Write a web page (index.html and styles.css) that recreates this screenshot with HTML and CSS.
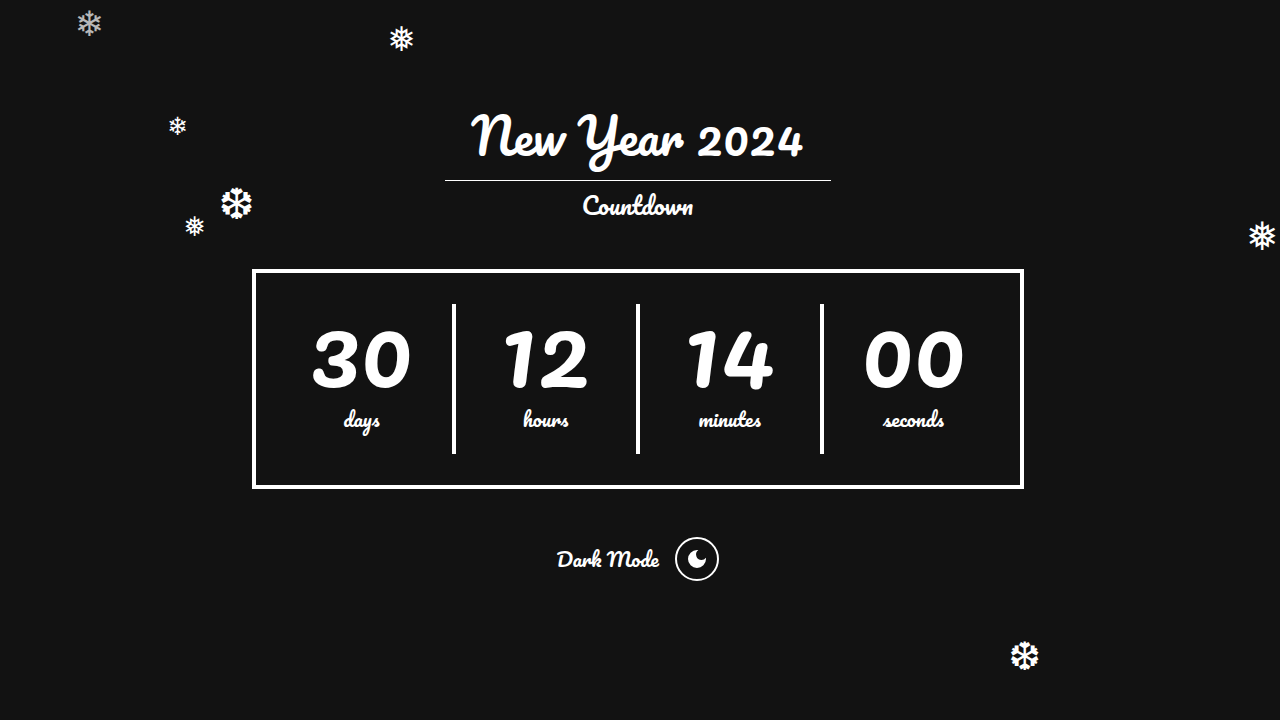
FILE: index.html
```html
<!DOCTYPE html>
<html lang="en">
<head>
<meta charset="utf-8">
<title>New Year Countdown</title>
<link rel="stylesheet" href="styles.css">
</head>
<body>
<main class="page">
  <header class="heading">
    <h1 class="title">New Year 2024</h1>
    <h2 class="subtitle">Countdown</h2>
  </header>
  <section class="countdown">
    <div class="unit"><div class="value">30</div><div class="label">days</div></div>
    <div class="unit"><div class="value">12</div><div class="label">hours</div></div>
    <div class="unit"><div class="value">14</div><div class="label">minutes</div></div>
    <div class="unit"><div class="value">00</div><div class="label">seconds</div></div>
  </section>
  <div class="mode">
    <span class="mode-text">Dark Mode</span>
    <button class="toggle" aria-label="Toggle theme"><svg width="24" height="24" viewBox="0 0 24 24"><path d="M12 3a9 9 0 1 0 9 9c0-.46-.04-.92-.1-1.360a5.389 5.389 0 0 1-4.400 2.260 5.403 5.403 0 0 1-3.140-9.800c-.44-.06-.9-.1-1.360-.1z"/></svg></button>
  </div>
</main>
<div class="flake f1">❄</div>
<div class="flake f2">❅</div>
<div class="flake f3">❄</div>
<div class="flake f4">❆</div>
<div class="flake f5">❅</div>
<div class="flake f6">❅</div>
<div class="flake f7">❆</div>
</body>
</html>
```
FILE: styles.css
```css
* { box-sizing: border-box; }
body { margin: 0; height: 720px; overflow: hidden; background: #121212; color: #fff; font-family: Pacifico, cursive; }
.page { width: 1275px; height: 720px; padding-top: 100px; display: flex; flex-direction: column; align-items: center; }
.heading { width: 386px; text-align: center; }
.title { margin: 0; height: 81px; border-bottom: 1px solid #fff; font-size: 48px; line-height: 72px; font-weight: 400; white-space: nowrap; }
.subtitle { margin: 0; height: 48px; font-size: 24px; line-height: 48px; font-weight: 400; }
.countdown { margin-top: 40px; width: 772px; height: 220px; border: 4px solid #fff; padding: 31px 16px; display: flex; }
.unit { width: 184px; height: 150px; border-right: 4px solid #fff; text-align: center; }
.unit:last-child { width: 180px; border-right: 0; }
.value { height: 96px; line-height: 86px; font-size: 96px; font-weight: 400; }
.label { height: 38px; line-height: 38px; font-size: 20px; font-weight: 400; }
.mode { margin-top: 48px; height: 44px; display: flex; align-items: center; gap: 16px; }
.mode-text { font-size: 20px; line-height: 34px; white-space: nowrap; }
.toggle { width: 44px; height: 44px; padding: 0; border: 2px solid #fff; border-radius: 50%; background: none; display: flex; align-items: center; justify-content: center; }
.toggle svg { fill: #fff; }
.flake { position: absolute; font-family: "DejaVu Sans"; line-height: 1; }
.f1 { left: 74.6px; top: 7px; font-size: 35px; opacity: .7; }
.f2 { left: 387.5px; top: 22px; font-size: 34px; }
.f3 { left: 167px; top: 114px; font-size: 25px; }
.f4 { left: 218.6px; top: 183px; font-size: 43px; }
.f5 { left: 183.6px; top: 213px; font-size: 27px; }
.f6 { left: 1246px; top: 217px; font-size: 39px; }
.f7 { left: 1008.5px; top: 637px; font-size: 39px; }
```
